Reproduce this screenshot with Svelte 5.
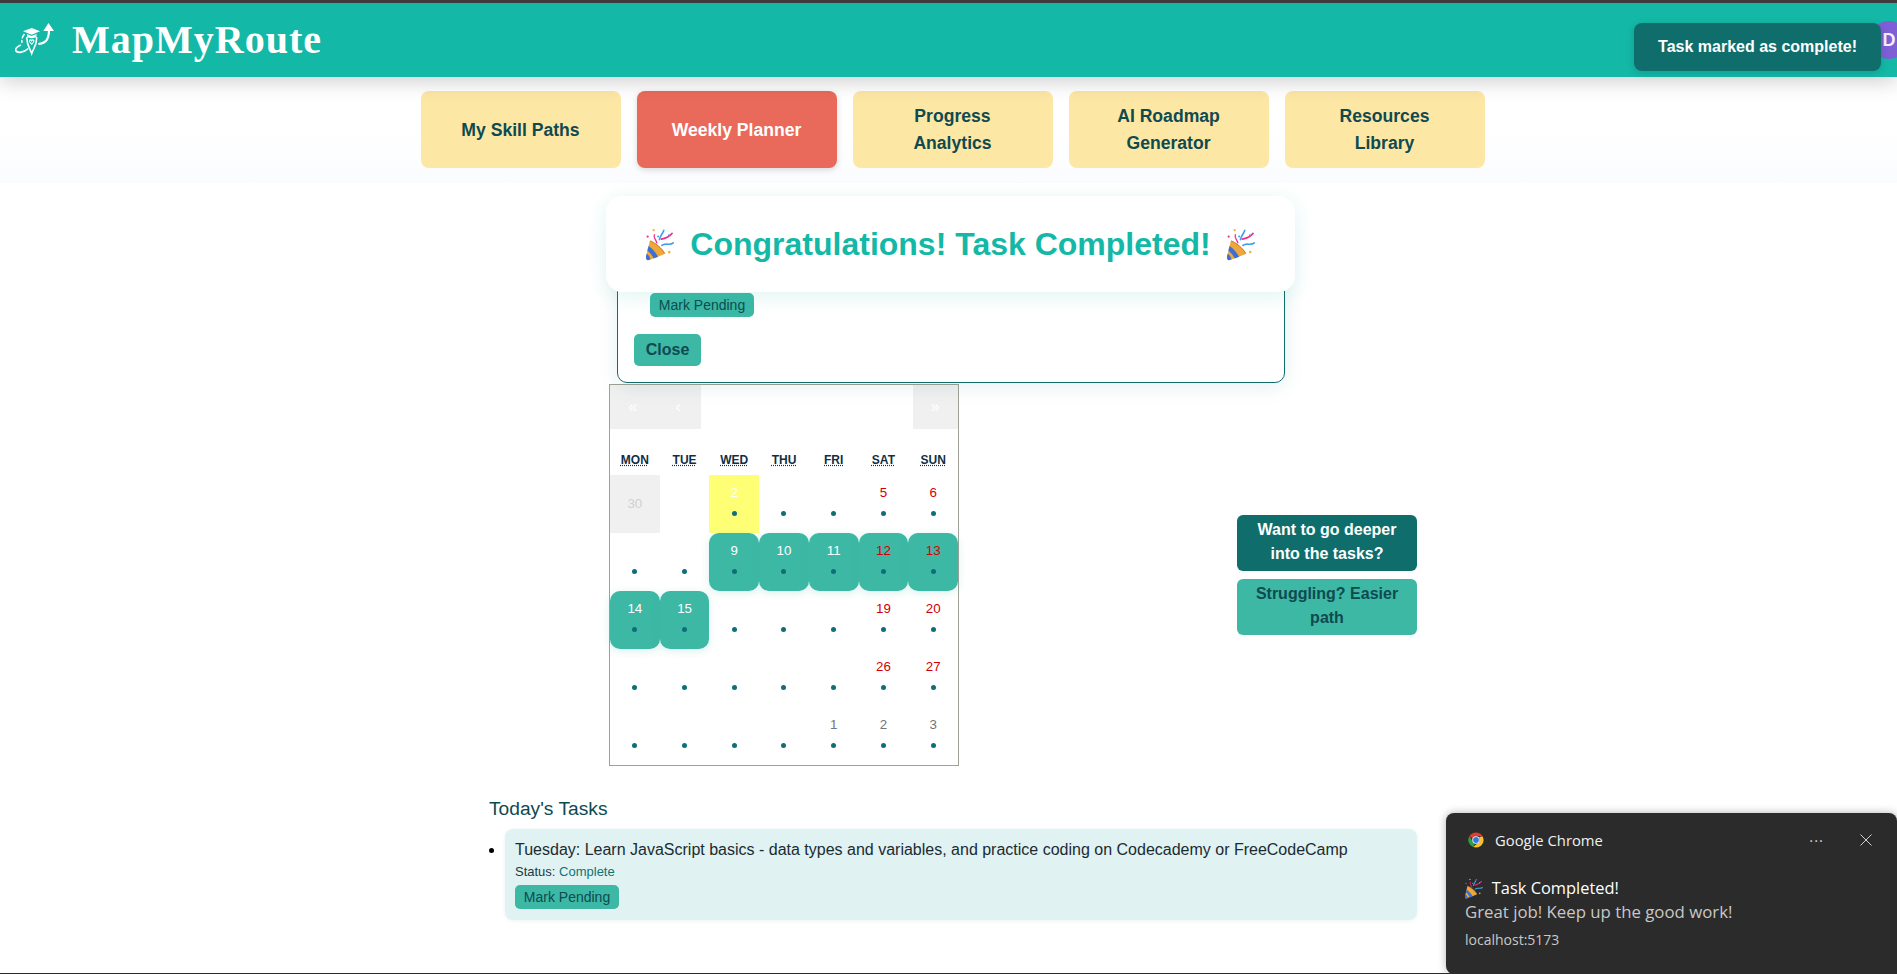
<script lang="ts">
  const tabs = [
    { label: "My Skill Paths" },
    { label: "Weekly Planner", active: true },
    { label: "Progress Analytics" },
    { label: "AI Roadmap Generator" },
    { label: "Resources Library" }
  ];
  const weekdays = ["MON", "TUE", "WED", "THU", "FRI", "SAT", "SUN"];

  // kind: off = disabled, out = neighbouring month, plain days are white on white like the app
  const days = [
    { n: 30, kind: "off" },
    { n: 1, noDot: true },
    { n: 2, kind: "now" },
    { n: 3 }, { n: 4 }, { n: 5, red: true }, { n: 6, red: true },
    { n: 7 }, { n: 8 },
    { n: 9, kind: "done" }, { n: 10, kind: "done" }, { n: 11, kind: "done" },
    { n: 12, kind: "done", red: true }, { n: 13, kind: "done", red: true },
    { n: 14, kind: "done" }, { n: 15, kind: "done" },
    { n: 16 }, { n: 17 }, { n: 18 }, { n: 19, red: true }, { n: 20, red: true },
    { n: 21 }, { n: 22 }, { n: 23 }, { n: 24 }, { n: 25 }, { n: 26, red: true }, { n: 27, red: true },
    { n: 28 }, { n: 29 }, { n: 30 }, { n: 31 },
    { n: 1, kind: "out" }, { n: 2, kind: "out" }, { n: 3, kind: "out" }
  ];
</script>

{#snippet popper(h)}
  <svg class="popper" height={h} width={h * 0.85} viewBox="28 15 88 104" fill="none" stroke-linecap="round">
    <path d="M40 55 C52 58 80 78 88 96 C70 104 48 112 36 116 C28 118 26 110 28 104 Z" fill="#eea83a" />
    <path d="M36 72 C48 80 60 94 66 106 L52 111 C46 100 40 92 32 86 Z" fill="#3b6fd8" />
    <path d="M30 96 C36 100 40 106 42 114 L34 117 C29 116 27 110 28 104 Z" fill="#3b6fd8" />
    <path d="M42 56 C54 60 78 78 86 94" stroke="#c9702f" stroke-width="3" />
    <path d="M62 62 C60 52 50 46 54 36" stroke="#f02a8c" stroke-width="4" />
    <path d="M70 52 C72 40 80 34 84 22" stroke="#3aa0ee" stroke-width="5" />
    <path d="M76 50 C86 48 96 48 110 32" stroke="#f02a8c" stroke-width="5" />
    <path d="M78 70 C90 60 102 72 114 62" stroke="#3aa0ee" stroke-width="5" />
    <circle cx="52" cy="22" r="3.500" fill="#f0b23c" />
    <circle cx="33" cy="42" r="3.500" fill="#f02a8c" />
    <circle cx="100" cy="38" r="3" fill="#3aa0ee" />
    <circle cx="101" cy="91" r="4" fill="#f0b23c" />
    <circle cx="66" cy="42" r="3" fill="#3aa0ee" />
  </svg>
{/snippet}

<div class="page">
  <header class="topbar">
    <div class="brand">
      <svg class="logo" width="40" height="33" viewBox="0 0 40 33" fill="none" stroke="#fff">
        <path d="M8 8.300 L16.700 5 L25 8.300 L16.700 11.700 Z" fill="#fff" stroke="none" />
        <path d="M12 11 V14 C14 15.500 19.500 15.500 21.500 14 V11 L16.700 13 Z" fill="#fff" stroke="none" />
        <path d="M12 14 C11 21 15 25 16.700 30.500 C18.500 25 22.500 21 21.500 14" stroke-width="1.6" />
        <path d="M14.500 17.500 C15.300 16.400 16.400 16.900 16.700 17.700 C17 16.900 18.100 16.400 18.900 17.500 C19.300 19 17.600 20.300 16.700 21.200 C15.800 20.300 14.100 19 14.500 17.500 Z" stroke-width="1.1" />
        <path d="M9.500 11 C7 14 6.500 17 7 20" stroke-width="1.500" stroke-dasharray="5 1.500" />
        <path d="M6 22 C2.500 23.500 0 25.500 0.800 27.800 C2.500 30.500 9 29.500 13.300 25.500" stroke-width="1.700" />
        <path d="M23.300 21 C29.500 20.500 33.800 18 34 7.500" stroke-width="2.200" />
        <path d="M28.300 8 L33.500 0 L39 8 Z" fill="#fff" stroke="none" />
      </svg>
      <h1>MapMyRoute</h1>
    </div>
    <div class="avatar">D</div>
  </header>

  <nav class="tabs">
    {#each tabs as tab}
      <button class="tab" class:active={tab.active}>{tab.label}</button>
    {/each}
  </nav>

  <main class="planner">
    <div class="modal-slot">
      <div class="task-modal">
        <button class="small-btn pending">Mark Pending</button>
        <button class="close-btn">Close</button>
      </div>
      <div class="congrats">
        {@render popper(33)}
        <span>Congratulations! Task Completed!</span>
        {@render popper(33)}
      </div>
    </div>

    <div class="cal-row">
      <div class="calendar">
        <div class="cal-nav">
          <button class="nav-btn off">«</button>
          <button class="nav-btn off">‹</button>
          <span class="nav-label"></span>
          <button class="nav-btn">›</button>
          <button class="nav-btn off">»</button>
        </div>
        <div class="weekdays">
          {#each weekdays as d}
            <div class="weekday"><abbr>{d}</abbr></div>
          {/each}
        </div>
        <div class="days">
          {#each days as day}
            <div class="tile {day.kind ?? ''}" class:red={day.red}>
              <span>{day.n}</span>
              {#if day.kind !== "off" && !day.noDot}<i class="dot"></i>{/if}
            </div>
          {/each}
        </div>
      </div>

      <div class="side-actions">
        <button class="side-btn deep">Want to go deeper into the tasks?</button>
        <button class="side-btn easy">Struggling? Easier path</button>
      </div>
    </div>

    <section class="today">
      <h3>Today's Tasks</h3>
      <ul>
        <li>
          <div class="task-card">
            <div class="task-text">Tuesday: Learn JavaScript basics - data types and variables, and practice coding on Codecademy or FreeCodeCamp</div>
            <div class="task-status">Status: <span>Complete</span></div>
            <button class="small-btn">Mark Pending</button>
          </div>
        </li>
      </ul>
    </section>
  </main>

  <div class="toast">Task marked as complete!</div>

  <aside class="notification">
    <div class="notif-head">
      <svg width="16" height="16" viewBox="0 0 32 32">
        <path d="M16 1 A15 15 0 0 1 29 8.500 H16 A7.500 7.500 0 0 0 9.200 12.800 L3 8 A15 15 0 0 1 16 1 Z" fill="#e33b2e" />
        <path d="M3 8 L9.500 19.500 A7.500 7.500 0 0 0 14 23.300 L10 30 A15 15 0 0 1 3 8 Z" fill="#2f9e44" />
        <path d="M29 8.500 A15 15 0 0 1 16 31 L10 30 L22.500 19.800 A7.500 7.500 0 0 0 22 10.500 Z" fill="#fbc02d" />
        <circle cx="16" cy="16" r="7.500" fill="#fff" />
        <circle cx="16" cy="16" r="5.800" fill="#2f78e4" />
      </svg>
      <span class="notif-app">Google Chrome</span>
      <span class="notif-more">···</span>
      <svg class="notif-close" width="12" height="12" viewBox="0 0 12 12" stroke="#d0d0d0" stroke-width="1"><path d="M0.500 0.500 L11.500 11.500 M11.500 0.500 L0.500 11.500" /></svg>
    </div>
    <div class="notif-title">{@render popper(21)}<span>Task Completed!</span></div>
    <div class="notif-body">Great job! Keep up the good work!</div>
    <div class="notif-src">localhost:5173</div>
  </aside>
</div>

<style>
  :global(body) {
    margin: 0;
    background: #fff;
    overflow: hidden;
  }

  .page {
    height: 974px;
    overflow: hidden;
    position: relative;
    font-family: "Liberation Sans", Arial, sans-serif;
    border-top: 3px solid #3f3a3d;
    border-bottom: 1px solid #2b2b2b;
    box-sizing: border-box;
  }

  button {
    font-family: inherit;
    cursor: pointer;
    border: none;
  }

  .topbar {
    height: 74px;
    background: #14b8a6;
    display: flex;
    align-items: center;
    justify-content: space-between;
    padding: 0 0 0 15px;
    box-shadow: 0 4px 20px rgba(0, 0, 0, 0.2);
    position: relative;
    z-index: 2;
  }

  .brand {
    display: flex;
    align-items: center;
    gap: 17px;
    padding-bottom: 2px;
  }

  .brand h1 {
    margin: 0;
    font-family: "Liberation Serif", "Times New Roman", serif;
    font-size: 40px;
    font-weight: 700;
    color: #fff;
    letter-spacing: 1px;
  }

  .avatar {
    width: 38px;
    height: 38px;
    flex: none;
    margin-right: -11px;
    border-radius: 50%;
    background: #7e5fd6;
    color: #f3f0ff;
    font-weight: 700;
    font-size: 18px;
    display: flex;
    align-items: center;
    justify-content: center;
  }

  .tabs {
    display: flex;
    justify-content: center;
    gap: 16px;
    padding: 14px 0 15px 8px;
    background: linear-gradient(#fff 50%, #fbfcff);
  }

  .tab {
    width: 200px;
    height: 77px;
    background: #fde7a5;
    color: #0f4a50;
    font-size: 17.6px;
    font-weight: 700;
    line-height: 27px;
    border-radius: 8px;
    padding: 1px 32px 0;
  }

  .tab.active {
    background: #e96a5b;
    color: #fff;
    box-shadow: 0 2px 6px rgba(0, 0, 0, 0.15);
  }

  .planner {
    width: 928px;
    margin-left: 489px;
    display: flex;
    flex-direction: column;
  }

  .modal-slot {
    position: relative;
    width: 689px;
    margin: 13px 0 0 117px;
    height: 187px;
  }

  .task-modal {
    position: absolute;
    left: 11px;
    right: 10px;
    top: 30px;
    bottom: 0;
    background: #fff;
    border: 1px solid #0f6e6c;
    border-radius: 10px;
    box-shadow: 0 4px 20px rgba(15, 110, 108, 0.1);
    box-sizing: border-box;
    display: flex;
    flex-direction: column;
    align-items: flex-start;
    justify-content: flex-end;
    padding: 0 0 16px 16px;
  }

  .congrats {
    position: absolute;
    inset: 0 0 auto 0;
    height: 96px;
    background: #fff;
    border-radius: 16px;
    box-shadow: 0 4px 20px rgba(20, 184, 166, 0.14);
    display: flex;
    align-items: center;
    justify-content: center;
    gap: 16px;
    color: #14b8a6;
    font-size: 32px;
    font-weight: 700;
    z-index: 1;
  }

  .popper {
    flex: none;
  }

  .small-btn {
    width: 104px;
    height: 24px;
    padding: 0;
    background: #3cb8a5;
    color: #0f4a50;
    font-size: 14px;
    border-radius: 5px;
  }

  .small-btn.pending {
    margin: 0 0 17px 16px;
  }

  .close-btn {
    width: 67px;
    height: 32px;
    padding: 0;
    background: #3cb8a5;
    color: #0f4a50;
    font-size: 16px;
    font-weight: 700;
    border-radius: 5px;
  }

  .cal-row {
    margin: 1px 0 0 120px;
    display: flex;
    justify-content: space-between;
    align-items: center;
  }

  .calendar {
    width: 350px;
    height: 382px;
    box-sizing: border-box;
    border: 1px solid #a0a096;
    background: #fff;
    font-size: 13.33px;
  }

  .cal-nav {
    display: flex;
    height: 44px;
    margin-bottom: 16px;
  }

  .nav-btn {
    width: 45.5px;
    padding: 0;
    background: #fff;
    color: #fff;
    font-size: 16px;
  }

  .nav-btn.off {
    background: #f0f0f0;
  }

  .nav-label {
    flex: 1;
  }

  .weekdays {
    display: grid;
    grid-template-columns: repeat(7, minmax(0, 1fr));
    height: 30px;
    align-items: center;
  }

  .weekday {
    text-align: center;
    font-size: 12px;
    font-weight: 700;
    color: #0f2f45;
  }

  .weekday abbr {
    text-decoration: underline dotted;
  }

  .days {
    display: grid;
    grid-template-columns: repeat(7, minmax(0, 1fr));
    grid-auto-rows: 58px;
  }

  .tile {
    display: flex;
    flex-direction: column;
    align-items: center;
    padding-top: 10px;
    box-sizing: border-box;
    color: #fff;
    line-height: 16px;
    gap: 10px;
  }

  .tile.red {
    color: #d10000;
  }

  .tile.out {
    color: #757575;
  }

  .tile.off {
    background: #f0f0f0;
    color: #d0d0d0;
    justify-content: center;
    padding-top: 0;
  }

  .tile.now {
    background: #ffff76;
  }

  .tile.done {
    background: #3cb8a5;
    border-radius: 10px;
    box-shadow: 0 2px 8px rgba(60, 184, 165, 0.2);
  }

  .dot {
    width: 5px;
    height: 5px;
    border-radius: 50%;
    background: #0f6e78;
  }

  .side-actions {
    width: 180px;
    display: flex;
    flex-direction: column;
    gap: 8px;
  }

  .side-btn {
    height: 56px;
    padding: 0 10px 2px;
    font-size: 16px;
    font-weight: 700;
    line-height: 24px;
    border-radius: 6px;
  }

  .side-btn.deep {
    background: #0f6e6c;
    color: #fff;
  }

  .side-btn.easy {
    background: #3cb8a5;
    color: #0f4a50;
  }

  .today {
    margin-top: 31px;
  }

  .today h3 {
    margin: 0 0 8px;
    font-size: 19.2px;
    font-weight: 400;
    line-height: 24px;
    color: #0f4a50;
  }

  .today ul {
    margin: 0;
    padding: 0 0 0 16px;
  }

  .task-card {
    background: #e0f2f1;
    border-radius: 8px;
    padding: 10px;
    height: 91px;
    box-sizing: border-box;
    box-shadow: 0 1px 4px rgba(15, 110, 108, 0.08);
  }

  .task-text {
    font-size: 16px;
    line-height: 22px;
    color: #1b2b33;
  }

  .task-status {
    font-size: 13px;
    line-height: 22px;
    color: #1b3b43;
    margin-bottom: 2px;
  }

  .task-status span {
    color: #0f7377;
  }

  .toast {
    position: absolute;
    left: 1634px;
    top: 20px;
    width: 247px;
    height: 48px;
    background: #0f6e6c;
    color: #fff;
    font-size: 16px;
    font-weight: 700;
    border-radius: 8px;
    display: flex;
    align-items: center;
    justify-content: center;
    box-shadow: 0 2px 8px rgba(0, 0, 0, 0.15);
    z-index: 3;
  }

  .notification {
    position: absolute;
    left: 1446px;
    right: 0;
    bottom: -1px;
    height: 161px;
    background: #2b2b2b;
    border-radius: 8px 8px 0 8px;
    box-shadow: 0 0 8px rgba(0, 0, 0, 0.3);
    font-family: "Open Sans", "Noto Sans", sans-serif;
    color: #fff;
    padding: 0 19px;
    box-sizing: border-box;
    z-index: 4;
  }

  .notif-head {
    display: flex;
    align-items: center;
    height: 54px;
    padding-left: 3px;
    gap: 11px;
    font-size: 14.8px;
    color: #f0f0f0;
  }

  .notif-more {
    margin-left: auto;
    color: #d0d0d0;
    letter-spacing: 1px;
    margin-right: 25px;
  }

  .notif-close {
    margin-right: 6px;
  }

  .notif-title {
    display: flex;
    align-items: center;
    gap: 9px;
    font-size: 16.4px;
    line-height: 24px;
    margin-top: 9px;
  }

  .notif-body {
    font-size: 16.8px;
    line-height: 24px;
    color: #c8c8c8;
  }

  .notif-src {
    font-size: 14px;
    line-height: 20px;
    margin-top: 6px;
    color: #c8c8c8;
  }
</style>
